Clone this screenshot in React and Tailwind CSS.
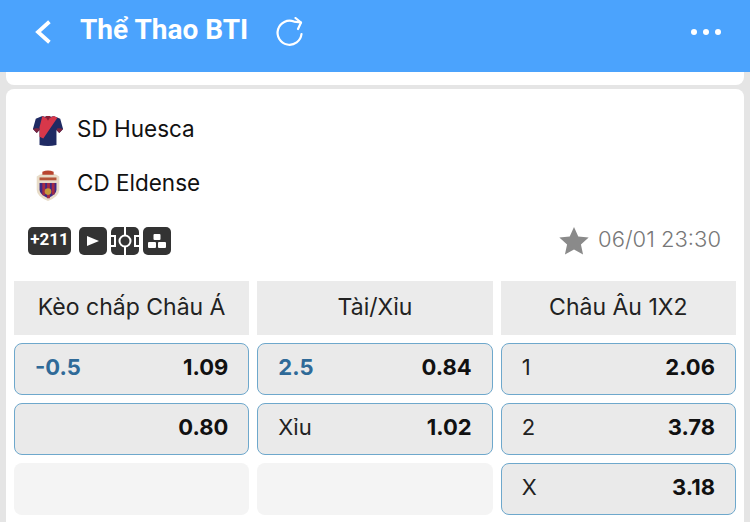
import React from 'react';

const Jersey = () => (
  <svg width="32" height="32" viewBox="0 0 34 34">
    <path d="M11 1 L17 3 L23 1 L30 4 L33 15 L29 19 L26 16 L26 32 Q17 34 8 32 L8 16 L5 19 L1 15 L4 4 Z" fill="#1f2a63" />
    <path d="M11 1 L17 4 L23 1 L27 3 L12 25 L8 23 L8 15 L8 13 Z" fill="#d8374a" />
    <path d="M14 1 L17 6 L20 1 Z" fill="#8c1f35" />
    <path d="M1 15 L5 19 L8 16 L7 14 L4 14 Z M33 15 L29 19 L26 16 L27 14 L30 14 Z" fill="#7c2540" />
  </svg>
);

const Crest = () => (
  <svg width="28" height="32" viewBox="0 0 28 34">
    <path d="M2 8 Q14 0 26 8 L26 22 Q26 29 14 34 Q2 29 2 22 Z" fill="#e8dcc8" />
    <path d="M5 15 H23 V22 Q23 27 14 31 Q5 27 5 22 Z" fill="#3c2a86" />
    <path d="M8 15 H11 V28 H8 Z M13 15 H16 V31 H13 Z M18 15 H21 V27 H18 Z" fill="#a52a45" />
    <circle cx="14" cy="24" r="3.5" fill="#c7983a" />
    <path d="M5 9 H23 V12 H5 Z" fill="#b4553a" />
    <path d="M8 3 Q14 0 20 3 L20 6 H8 Z" fill="#b8452f" />
  </svg>
);

const Team = ({ icon, name }) => (
  <div className="flex items-center h-[54px]">
    <div className="w-[34px] flex justify-center mr-[12px] mt-[3px]">{icon}</div>
    <span className="text-[22.5px] text-[#111]">{name}</span>
  </div>
);

const IconBox = ({ children, className = 'w-7' }) => (
  <div className={`h-7 ${className} rounded-[5px] bg-[#333] flex items-center justify-center text-white`}>
    {children}
  </div>
);

const Odd = ({ label, value, blue }) => (
  <div className="h-[52px] rounded-lg border border-[#6ea8cc] bg-[#eaeaea] flex items-center justify-between pl-5 pr-5 pb-[3px] text-[22px]">
    <span className={blue ? 'font-bold text-[#2f6a98]' : 'text-[#222]'}>{label}</span>
    <span className="font-bold text-[#111]">{value}</span>
  </div>
);

const Empty = () => <div className="h-[52px] rounded-lg bg-[#f4f4f4]" />;

const columns = [
  {
    title: 'Kèo chấp Châu Á',
    rows: [{ label: '-0.5', value: '1.09', blue: true }, { label: '', value: '0.80' }, null],
  },
  {
    title: 'Tài/Xỉu',
    rows: [{ label: '2.5', value: '0.84', blue: true }, { label: 'Xỉu', value: '1.02' }, null],
  },
  {
    title: 'Châu Âu 1X2',
    rows: [{ label: '1', value: '2.06' }, { label: '2', value: '3.78' }, { label: 'X', value: '3.18' }],
  },
];

export default function App() {
  return (
    <div className="w-[750px] h-[522px] overflow-hidden bg-[#e5e5e5] font-['Inter',sans-serif]">
      {/* Header */}
      <div className="h-[72px] bg-[#4ba3fd] flex items-center pb-2 pl-[33px] pr-[29px] text-white">
        <svg width="20" height="26" viewBox="0 0 20 26" fill="none" stroke="white" strokeWidth="3.8" strokeLinecap="square">
          <path d="M15 4 L5 13 L15 22" />
        </svg>
        <h1 className="ml-[27px] -mt-1 text-[28px] font-bold font-['Roboto',sans-serif]">Thể Thao BTI</h1>
        <svg className="ml-[27px]" width="30" height="30" viewBox="0 0 30 30" fill="none" stroke="white" strokeWidth="2.2" strokeLinecap="round" strokeLinejoin="round">
          <path d="M26.5 17 A12 12 0 1 1 19 4.6 L26 5.5" />
          <path d="M20.5 1 L26 5.5 L23 12" />
        </svg>
        <div className="ml-auto flex gap-[6px]">
          <span className="w-[6px] h-[6px] rounded-full bg-white" />
          <span className="w-[6px] h-[6px] rounded-full bg-white" />
          <span className="w-[6px] h-[6px] rounded-full bg-white" />
        </div>
      </div>

      <div className="mx-[6px] h-[13px] bg-white rounded-b-lg" />

      {/* Match card */}
      <div className="mx-[6px] mt-1 bg-white rounded-t-lg px-2 pt-[13px] h-[433px]">
        <div className="pl-[17px]">
          <Team icon={<Jersey />} name="SD Huesca" />
          <Team icon={<Crest />} name="CD Eldense" />
        </div>

        <div className="flex items-center justify-between h-[28px] mt-[17px] pl-[14px] pr-[15px]">
          <div className="flex items-center">
            <IconBox className="w-[43px]">
              <span className="-mt-[2px] text-[17px] font-bold font-['Roboto',sans-serif]">+211</span>
            </IconBox>
            <div className="flex ml-2 gap-[4px]">
              <IconBox>
                <svg width="14" height="12" viewBox="0 0 14 12"><path d="M1 1 L13 6 L1 11 Z" fill="white" /></svg>
              </IconBox>
              <IconBox>
                <svg width="28" height="28" viewBox="0 0 28 28" fill="none" stroke="white" strokeWidth="2">
                  <path d="M14 0 V28" />
                  <circle cx="14" cy="14" r="5.5" fill="#333" />
                  <path d="M0 9 H4 V19 H0 M28 9 H24 V19 H28" />
                </svg>
              </IconBox>
              <IconBox>
                <svg width="18" height="15" viewBox="0 0 18 15" fill="white">
                  <rect x="5.5" y="0" width="7" height="6" rx="1" />
                  <rect x="0" y="8" width="8" height="6" rx="1" />
                  <rect x="10" y="8" width="8" height="6" rx="1" />
                </svg>
              </IconBox>
            </div>
          </div>
          <div className="flex items-center">
            <svg width="32" height="32" viewBox="0 0 24 24" fill="#8a8a8a">
              <path d="M12 1.5 L15.2 8.6 L23 9.4 L17.2 14.6 L18.8 22.2 L12 18.3 L5.2 22.2 L6.8 14.6 L1 9.4 L8.8 8.6 Z" />
            </svg>
            <span className="ml-2 -mt-[4px] text-[22px] font-light text-[#777]">06/01 23:30</span>
          </div>
        </div>

        {/* Odds */}
        <div className="grid grid-cols-3 gap-x-2 mt-[26px]">
          {columns.map((col) => (
            <div key={col.title} className="flex flex-col gap-2">
              <div className="h-[54px] bg-[#ebebeb] flex items-center justify-center pb-[2px] text-[23px] text-[#222]">
                {col.title}
              </div>
              {col.rows.map((row, i) => (row ? <Odd key={i} {...row} /> : <Empty key={i} />))}
            </div>
          ))}
        </div>
      </div>
    </div>
  );
}
